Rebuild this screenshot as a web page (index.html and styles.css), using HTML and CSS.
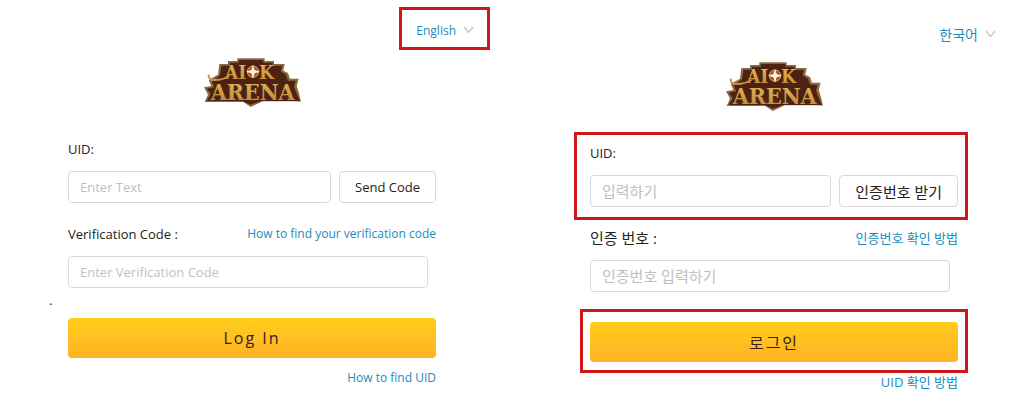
FILE: index.html
```html
<!DOCTYPE html>
<html lang="en">
<head>
    <meta charset="UTF-8">
    <meta name="viewport" content="width=device-width, initial-scale=1.0">
    <title>AFK Arena Login</title>
    <link rel="stylesheet" href="styles.css">
</head>
<body>
    <form class="login-form">
        <div class="lang marked marked-lang">
            <select id="lang-en" aria-label="Language">
                <option>English</option>
                <option>한국어</option>
            </select>
            <svg class="arrow" viewBox="0 0 11 8"><path d="M1 1L5.5 6.5L10 1"/></svg>
        </div>
        <svg class="logo" viewBox="0 0 291 150" role="img" aria-label="AFK Arena">
            <defs>
                <linearGradient id="gold" x1="0" y1="0" x2="0" y2="1">
                    <stop offset="0" stop-color="#e8bd58"/>
                    <stop offset="1" stop-color="#bd8436"/>
                </linearGradient>
            </defs>
            <path class="logo-rim" d="M100 1H182V9H210V18H242L238 38L252 45L258 62H284L278 84L284 102L291 131L279 130H176L140 147L118 132H2L12 110L0 88L22 84L14 66L42 50L46 18H72V9H100Z"/>
            <path class="logo-plate" d="M104 6H178V14H206V23H234L230 40L246 50L252 68H275L270 86L277 104L288 129H172L140 140L116 129H8L20 108L8 92L30 88L24 70L48 52L52 23H78V14H104Z"/>
            <path class="logo-swirl" d="M14 50Q12 66 32 66Q56 66 76 54"/>
            <g class="logo-text">
                <text x="62" y="63" font-size="58">A</text>
                <text x="103" y="63" font-size="58">I</text>
                <text x="165" y="63" font-size="58">K</text>
                <text x="20" y="125" font-size="69">ARENA</text>
            </g>
            <circle class="logo-ring" cx="147" cy="41" r="17"/>
            <path class="logo-star" d="M147 20L152 36L168 41L152 46L147 62L142 46L126 41L142 36Z"/>
        </svg>
        <div class="form-group">
            <label for="uid-en">UID:</label>
            <div class="input-row">
                <input type="text" id="uid-en" placeholder="Enter Text">
                <button type="button" class="code-btn">Send Code</button>
            </div>
        </div>
        <div class="form-group">
            <div class="label-row">
                <label for="code-en">Verification Code :</label>
                <a href="#">How to find your verification code</a>
            </div>
            <input type="text" id="code-en" class="code-input" placeholder="Enter Verification Code">
        </div>
        <div class="submit">
            <span class="dot">.</span>
            <button type="button" class="login-btn">Log In</button>
        </div>
        <a href="#" class="uid-link">How to find UID</a>
    </form>

    <form class="login-form korean" lang="ko">
        <div class="lang">
            <select id="lang-ko" aria-label="언어">
                <option>한국어</option>
                <option>English</option>
            </select>
            <svg class="arrow" viewBox="0 0 11 8"><path d="M1 1L5.5 6.5L10 1"/></svg>
        </div>
        <svg class="logo" viewBox="0 0 291 150" role="img" aria-label="AFK Arena">
            <path class="logo-rim" d="M100 1H182V9H210V18H242L238 38L252 45L258 62H284L278 84L284 102L291 131L279 130H176L140 147L118 132H2L12 110L0 88L22 84L14 66L42 50L46 18H72V9H100Z"/>
            <path class="logo-plate" d="M104 6H178V14H206V23H234L230 40L246 50L252 68H275L270 86L277 104L288 129H172L140 140L116 129H8L20 108L8 92L30 88L24 70L48 52L52 23H78V14H104Z"/>
            <path class="logo-swirl" d="M14 50Q12 66 32 66Q56 66 76 54"/>
            <g class="logo-text">
                <text x="62" y="63" font-size="58">A</text>
                <text x="103" y="63" font-size="58">I</text>
                <text x="165" y="63" font-size="58">K</text>
                <text x="20" y="125" font-size="69">ARENA</text>
            </g>
            <circle class="logo-ring" cx="147" cy="41" r="17"/>
            <path class="logo-star" d="M147 20L152 36L168 41L152 46L147 62L142 46L126 41L142 36Z"/>
        </svg>
        <div class="form-group marked marked-uid">
            <label for="uid-ko" class="uid-label">UID:</label>
            <div class="input-row">
                <input type="text" id="uid-ko" placeholder="입력하기">
                <button type="button" class="code-btn">인증번호 받기</button>
            </div>
        </div>
        <div class="form-group">
            <div class="label-row">
                <label for="code-ko">인증 번호 :</label>
                <a href="#">인증번호 확인 방법</a>
            </div>
            <input type="text" id="code-ko" class="code-input" placeholder="인증번호 입력하기">
        </div>
        <div class="submit marked marked-login">
            <button type="button" class="login-btn">로그인</button>
        </div>
        <a href="#" class="uid-link">UID 확인 방법</a>
    </form>
</body>
</html>
```
FILE: styles.css
```css
* {
    box-sizing: border-box;
}
body {
    margin: 0;
    padding: 20px 72px 0 68px;
    display: grid;
    grid-template-columns: 1fr 1fr;
    gap: 154px;
    align-items: start;
    background-color: #fff;
    color: #222;
    font-family: "Open Sans", "Noto Sans CJK KR", sans-serif;
    font-size: 13px;
    line-height: 20px;
}
.login-form {
    display: flex;
    flex-direction: column;
}
.korean {
    padding-top: 4px;
    font-size: 15px;
}
input,
button,
select {
    font-family: inherit;
    font-size: inherit;
    color: inherit;
}
a {
    color: #1a8cbe;
    font-size: 12px;
    text-decoration: none;
}
.korean a {
    font-size: 13px;
}

/* language */
.lang {
    display: flex;
    align-items: center;
    align-self: flex-end;
    gap: 7px;
    height: 20px;
    margin-right: -38px;
}
.lang select {
    appearance: none;
    border: none;
    padding: 0;
    background: none;
    color: #1a8cbe;
    font-size: 12px;
    text-align-last: right;
    cursor: pointer;
}
.korean .lang select {
    font-size: 14px;
}
.arrow {
    width: 11px;
    height: 8px;
    fill: none;
    stroke: #c4c4c4;
    stroke-width: 1.3;
    pointer-events: none;
}

/* logo */
.logo {
    align-self: center;
    width: 97px;
    height: 50px;
    margin: 18px 0 31px;
}
.logo-rim {
    fill: #8d6a3c;
}
.logo-plate {
    fill: #4c2213;
}
.logo-swirl {
    fill: none;
    stroke: #c8964a;
    stroke-width: 6;
}
.logo-text {
    fill: url(#gold);
    font-family: "DejaVu Serif Condensed", "DejaVu Serif", serif;
    font-weight: bold;
}
.logo-ring {
    fill: #a8522c;
    stroke: #e3b568;
    stroke-width: 3;
}
.logo-star {
    fill: #fff3dc;
}

/* fields */
.form-group {
    margin-bottom: 20px;
}
.form-group label {
    display: block;
    line-height: 20px;
}
.form-group .uid-label {
    font-size: 13px;
}
.input-row {
    display: flex;
    gap: 8px;
    margin-top: 12px;
}
.label-row {
    display: flex;
    justify-content: space-between;
    align-items: center;
    height: 21px;
    margin-bottom: 12px;
}
input {
    flex: 1;
    min-width: 0;
    height: 32px;
    padding: 0 11px;
    border: 1px solid #d9d9d9;
    border-radius: 4px;
    background-color: #fff;
}
input::placeholder {
    color: #bfbfbf;
}
input:focus {
    outline: none;
    border-color: #ffb822;
}
.code-input {
    width: calc(100% - 8px);
}
.code-btn {
    height: 32px;
    padding: 0 15px;
    border: 1px solid #d9d9d9;
    border-radius: 4px;
    background-color: #fff;
    cursor: pointer;
}

/* submit */
.submit {
    position: relative;
    margin-top: 10px;
}
.login-btn {
    display: block;
    width: 100%;
    height: 40px;
    border: none;
    border-radius: 4px;
    background: linear-gradient(#ffce1c, #ffb224);
    color: #3a2020;
    font-size: 16px;
    letter-spacing: 2px;
    cursor: pointer;
}
.dot {
    position: absolute;
    left: -19px;
    top: -28px;
}
.uid-link {
    align-self: flex-end;
    margin-top: 10px;
}

/* red frames around the highlighted steps */
.marked {
    position: relative;
}
.marked::after {
    content: "";
    position: absolute;
    border: 3px solid #d01818;
    pointer-events: none;
}
.marked-lang::after {
    inset: -13px -16px -10px -17px;
}
.marked-uid::after {
    inset: -11px -10px -13px -16px;
}
.marked-login::after {
    inset: -13px -10px -11px;
}
```
